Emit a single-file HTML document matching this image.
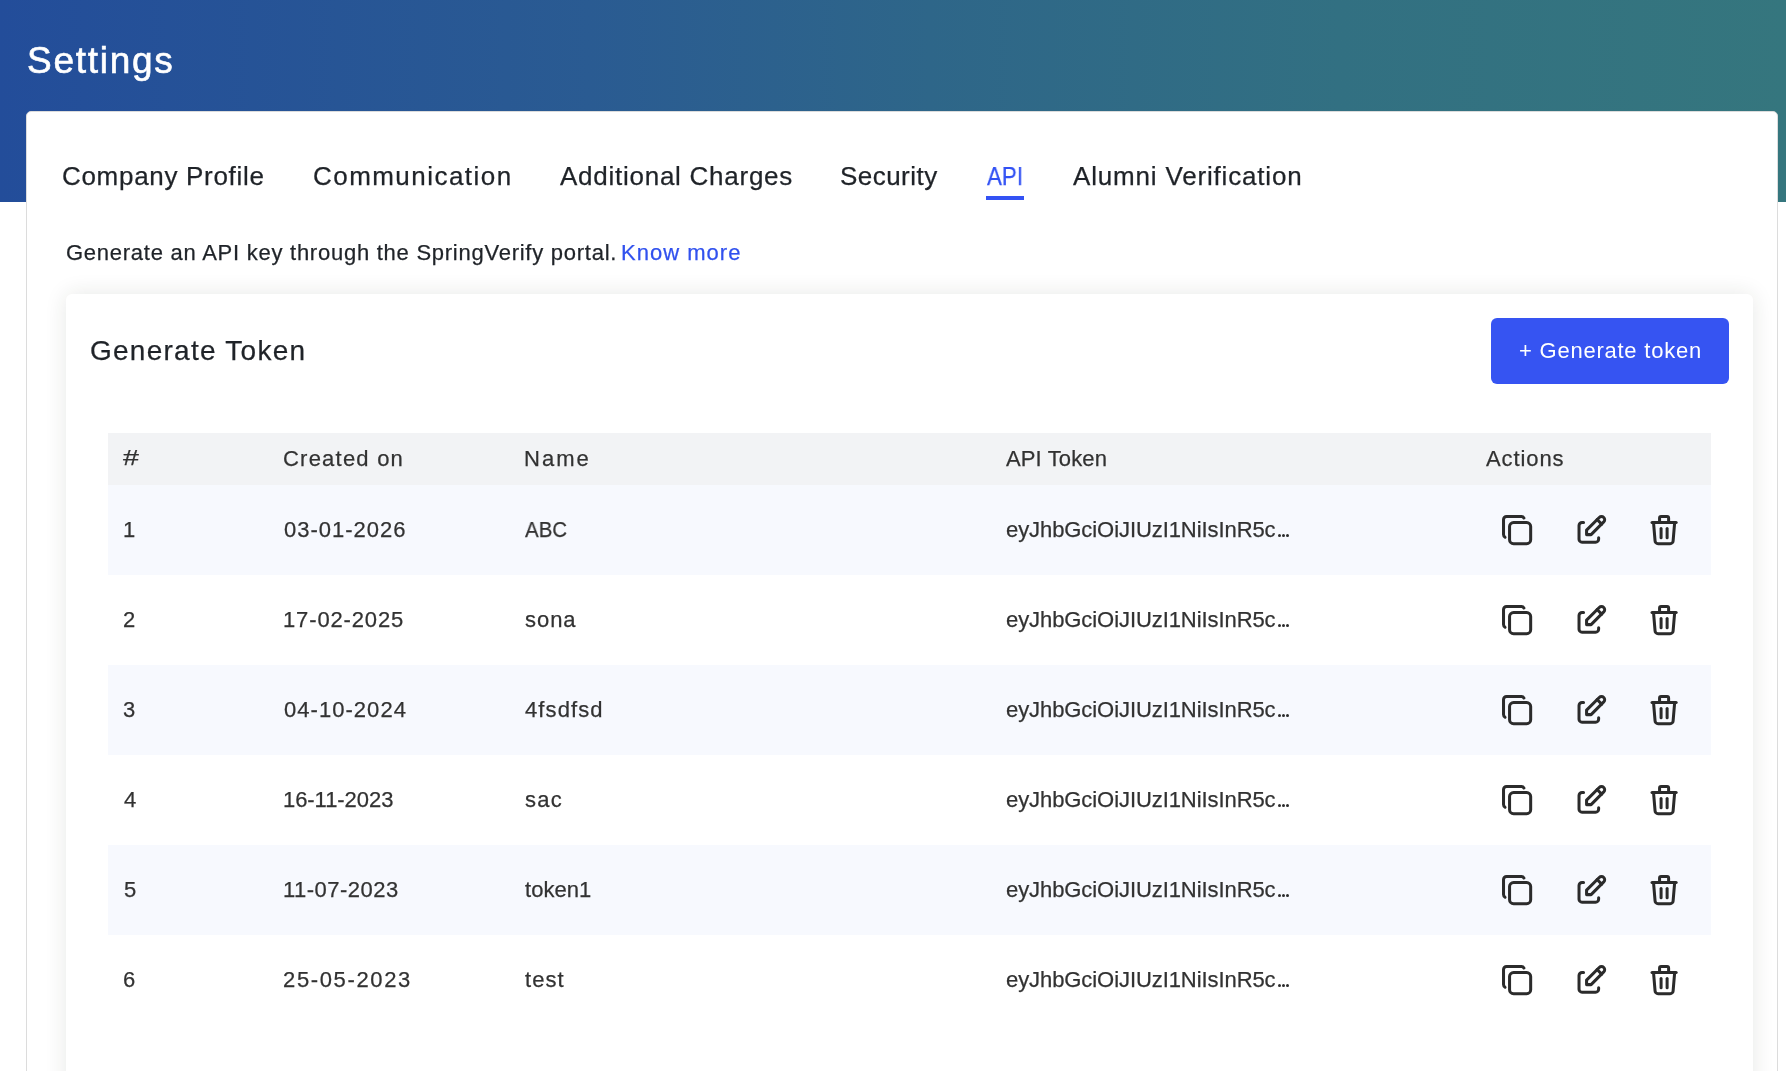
<!DOCTYPE html>
<html>
<head>
<meta charset="utf-8">
<style>
* { box-sizing: border-box; margin: 0; padding: 0; }
html, body { width: 1786px; height: 1071px; overflow: hidden; background: #fff; }
body { font-family: "Liberation Sans", sans-serif; position: relative; }
.hdr { position: absolute; left: 0; top: 0; width: 1786px; height: 202px;
  background: linear-gradient(90deg, #234d9a 0%, #2a5b92 33%, #2e6689 52%, #327082 75%, #35767e 100%); }
.card { position: absolute; left: 26px; top: 111px; width: 1752px; height: 1000px; background: #fff;
  border: 1px solid #dcdcdc; border-radius: 5px; }
.uline { position: absolute; left: 986px; top: 196px; width: 38px; height: 4px; background: #3352f4; }
.inner { position: absolute; left: 66px; top: 294px; width: 1687px; height: 900px; background: #fff;
  border-radius: 6px; box-shadow: 0 0 22px rgba(40,50,30,0.11); }
.btn { position: absolute; left: 1491px; top: 318px; width: 238px; height: 66px; background: #3654f2; border-radius: 6px; }
.thead { position: absolute; left: 108px; top: 433px; width: 1603px; height: 52px; background: #f2f3f5; }
.row { position: absolute; left: 108px; width: 1603px; height: 90px; background: #f7f9fe; }
.t { position: absolute; white-space: nowrap; -webkit-text-stroke: 0.25px currentColor; will-change: transform; }
.ic { position: absolute; }
.dot { position: absolute; width: 3px; height: 3px; border-radius: 50%; background: #2b2b2b; }
</style>
</head>
<body>
<div class="hdr"></div>
<div class="card"></div>
<div class="uline"></div>
<div class="inner"></div>
<div class="btn"></div>
<div class="thead"></div>
<div class="row" style="top:485px"></div>
<div class="row" style="top:665px"></div>
<div class="row" style="top:845px"></div>
<svg class="ic" style="left:1499.4px;top:512.1px" width="36.2" height="36.2" viewBox="0 0 24 24" fill="none" stroke="#2b2b2b" stroke-width="2" stroke-linecap="round" stroke-linejoin="round"><path d="M7 7m0 2.667a2.667 2.667 0 0 1 2.667 -2.667h8.666a2.667 2.667 0 0 1 2.667 2.667v8.666a2.667 2.667 0 0 1 -2.667 2.667h-8.666a2.667 2.667 0 0 1 -2.667 -2.667z"/><path d="M4.012 16.737a2.005 2.005 0 0 1 -1.012 -1.737v-10c0 -1.1 .9 -2 2 -2h10c.75 0 1.158 .385 1.5 1"/></svg>
<svg class="ic" style="left:1572.6px;top:512.1px" width="36.2" height="36.2" viewBox="0 0 24 24" fill="none" stroke="#2b2b2b" stroke-width="2" stroke-linecap="round" stroke-linejoin="round"><path d="M7 7h-1a2 2 0 0 0 -2 2v9a2 2 0 0 0 2 2h9a2 2 0 0 0 2 -2v-1"/><path d="M20.385 6.585a2.1 2.1 0 0 0 -2.97 -2.97l-8.415 8.385v3h3l8.385 -8.415z"/><path d="M16 5l3 3"/></svg>
<svg class="ic" style="left:1646.1px;top:512.1px" width="36.2" height="36.2" viewBox="0 0 24 24" fill="none" stroke="#2b2b2b" stroke-width="2" stroke-linecap="round" stroke-linejoin="round"><path d="M4 7l16 0"/><path d="M10 11l0 6"/><path d="M14 11l0 6"/><path d="M5 7l1 12a2 2 0 0 0 2 2h8a2 2 0 0 0 2 -2l1 -12"/><path d="M9 7v-3a1 1 0 0 1 1 -1h4a1 1 0 0 1 1 1v3"/></svg>
<svg class="ic" style="left:1499.4px;top:602.1px" width="36.2" height="36.2" viewBox="0 0 24 24" fill="none" stroke="#2b2b2b" stroke-width="2" stroke-linecap="round" stroke-linejoin="round"><path d="M7 7m0 2.667a2.667 2.667 0 0 1 2.667 -2.667h8.666a2.667 2.667 0 0 1 2.667 2.667v8.666a2.667 2.667 0 0 1 -2.667 2.667h-8.666a2.667 2.667 0 0 1 -2.667 -2.667z"/><path d="M4.012 16.737a2.005 2.005 0 0 1 -1.012 -1.737v-10c0 -1.1 .9 -2 2 -2h10c.75 0 1.158 .385 1.5 1"/></svg>
<svg class="ic" style="left:1572.6px;top:602.1px" width="36.2" height="36.2" viewBox="0 0 24 24" fill="none" stroke="#2b2b2b" stroke-width="2" stroke-linecap="round" stroke-linejoin="round"><path d="M7 7h-1a2 2 0 0 0 -2 2v9a2 2 0 0 0 2 2h9a2 2 0 0 0 2 -2v-1"/><path d="M20.385 6.585a2.1 2.1 0 0 0 -2.97 -2.97l-8.415 8.385v3h3l8.385 -8.415z"/><path d="M16 5l3 3"/></svg>
<svg class="ic" style="left:1646.1px;top:602.1px" width="36.2" height="36.2" viewBox="0 0 24 24" fill="none" stroke="#2b2b2b" stroke-width="2" stroke-linecap="round" stroke-linejoin="round"><path d="M4 7l16 0"/><path d="M10 11l0 6"/><path d="M14 11l0 6"/><path d="M5 7l1 12a2 2 0 0 0 2 2h8a2 2 0 0 0 2 -2l1 -12"/><path d="M9 7v-3a1 1 0 0 1 1 -1h4a1 1 0 0 1 1 1v3"/></svg>
<svg class="ic" style="left:1499.4px;top:692.1px" width="36.2" height="36.2" viewBox="0 0 24 24" fill="none" stroke="#2b2b2b" stroke-width="2" stroke-linecap="round" stroke-linejoin="round"><path d="M7 7m0 2.667a2.667 2.667 0 0 1 2.667 -2.667h8.666a2.667 2.667 0 0 1 2.667 2.667v8.666a2.667 2.667 0 0 1 -2.667 2.667h-8.666a2.667 2.667 0 0 1 -2.667 -2.667z"/><path d="M4.012 16.737a2.005 2.005 0 0 1 -1.012 -1.737v-10c0 -1.1 .9 -2 2 -2h10c.75 0 1.158 .385 1.5 1"/></svg>
<svg class="ic" style="left:1572.6px;top:692.1px" width="36.2" height="36.2" viewBox="0 0 24 24" fill="none" stroke="#2b2b2b" stroke-width="2" stroke-linecap="round" stroke-linejoin="round"><path d="M7 7h-1a2 2 0 0 0 -2 2v9a2 2 0 0 0 2 2h9a2 2 0 0 0 2 -2v-1"/><path d="M20.385 6.585a2.1 2.1 0 0 0 -2.97 -2.97l-8.415 8.385v3h3l8.385 -8.415z"/><path d="M16 5l3 3"/></svg>
<svg class="ic" style="left:1646.1px;top:692.1px" width="36.2" height="36.2" viewBox="0 0 24 24" fill="none" stroke="#2b2b2b" stroke-width="2" stroke-linecap="round" stroke-linejoin="round"><path d="M4 7l16 0"/><path d="M10 11l0 6"/><path d="M14 11l0 6"/><path d="M5 7l1 12a2 2 0 0 0 2 2h8a2 2 0 0 0 2 -2l1 -12"/><path d="M9 7v-3a1 1 0 0 1 1 -1h4a1 1 0 0 1 1 1v3"/></svg>
<svg class="ic" style="left:1499.4px;top:782.1px" width="36.2" height="36.2" viewBox="0 0 24 24" fill="none" stroke="#2b2b2b" stroke-width="2" stroke-linecap="round" stroke-linejoin="round"><path d="M7 7m0 2.667a2.667 2.667 0 0 1 2.667 -2.667h8.666a2.667 2.667 0 0 1 2.667 2.667v8.666a2.667 2.667 0 0 1 -2.667 2.667h-8.666a2.667 2.667 0 0 1 -2.667 -2.667z"/><path d="M4.012 16.737a2.005 2.005 0 0 1 -1.012 -1.737v-10c0 -1.1 .9 -2 2 -2h10c.75 0 1.158 .385 1.5 1"/></svg>
<svg class="ic" style="left:1572.6px;top:782.1px" width="36.2" height="36.2" viewBox="0 0 24 24" fill="none" stroke="#2b2b2b" stroke-width="2" stroke-linecap="round" stroke-linejoin="round"><path d="M7 7h-1a2 2 0 0 0 -2 2v9a2 2 0 0 0 2 2h9a2 2 0 0 0 2 -2v-1"/><path d="M20.385 6.585a2.1 2.1 0 0 0 -2.97 -2.97l-8.415 8.385v3h3l8.385 -8.415z"/><path d="M16 5l3 3"/></svg>
<svg class="ic" style="left:1646.1px;top:782.1px" width="36.2" height="36.2" viewBox="0 0 24 24" fill="none" stroke="#2b2b2b" stroke-width="2" stroke-linecap="round" stroke-linejoin="round"><path d="M4 7l16 0"/><path d="M10 11l0 6"/><path d="M14 11l0 6"/><path d="M5 7l1 12a2 2 0 0 0 2 2h8a2 2 0 0 0 2 -2l1 -12"/><path d="M9 7v-3a1 1 0 0 1 1 -1h4a1 1 0 0 1 1 1v3"/></svg>
<svg class="ic" style="left:1499.4px;top:872.1px" width="36.2" height="36.2" viewBox="0 0 24 24" fill="none" stroke="#2b2b2b" stroke-width="2" stroke-linecap="round" stroke-linejoin="round"><path d="M7 7m0 2.667a2.667 2.667 0 0 1 2.667 -2.667h8.666a2.667 2.667 0 0 1 2.667 2.667v8.666a2.667 2.667 0 0 1 -2.667 2.667h-8.666a2.667 2.667 0 0 1 -2.667 -2.667z"/><path d="M4.012 16.737a2.005 2.005 0 0 1 -1.012 -1.737v-10c0 -1.1 .9 -2 2 -2h10c.75 0 1.158 .385 1.5 1"/></svg>
<svg class="ic" style="left:1572.6px;top:872.1px" width="36.2" height="36.2" viewBox="0 0 24 24" fill="none" stroke="#2b2b2b" stroke-width="2" stroke-linecap="round" stroke-linejoin="round"><path d="M7 7h-1a2 2 0 0 0 -2 2v9a2 2 0 0 0 2 2h9a2 2 0 0 0 2 -2v-1"/><path d="M20.385 6.585a2.1 2.1 0 0 0 -2.97 -2.97l-8.415 8.385v3h3l8.385 -8.415z"/><path d="M16 5l3 3"/></svg>
<svg class="ic" style="left:1646.1px;top:872.1px" width="36.2" height="36.2" viewBox="0 0 24 24" fill="none" stroke="#2b2b2b" stroke-width="2" stroke-linecap="round" stroke-linejoin="round"><path d="M4 7l16 0"/><path d="M10 11l0 6"/><path d="M14 11l0 6"/><path d="M5 7l1 12a2 2 0 0 0 2 2h8a2 2 0 0 0 2 -2l1 -12"/><path d="M9 7v-3a1 1 0 0 1 1 -1h4a1 1 0 0 1 1 1v3"/></svg>
<svg class="ic" style="left:1499.4px;top:962.1px" width="36.2" height="36.2" viewBox="0 0 24 24" fill="none" stroke="#2b2b2b" stroke-width="2" stroke-linecap="round" stroke-linejoin="round"><path d="M7 7m0 2.667a2.667 2.667 0 0 1 2.667 -2.667h8.666a2.667 2.667 0 0 1 2.667 2.667v8.666a2.667 2.667 0 0 1 -2.667 2.667h-8.666a2.667 2.667 0 0 1 -2.667 -2.667z"/><path d="M4.012 16.737a2.005 2.005 0 0 1 -1.012 -1.737v-10c0 -1.1 .9 -2 2 -2h10c.75 0 1.158 .385 1.5 1"/></svg>
<svg class="ic" style="left:1572.6px;top:962.1px" width="36.2" height="36.2" viewBox="0 0 24 24" fill="none" stroke="#2b2b2b" stroke-width="2" stroke-linecap="round" stroke-linejoin="round"><path d="M7 7h-1a2 2 0 0 0 -2 2v9a2 2 0 0 0 2 2h9a2 2 0 0 0 2 -2v-1"/><path d="M20.385 6.585a2.1 2.1 0 0 0 -2.97 -2.97l-8.415 8.385v3h3l8.385 -8.415z"/><path d="M16 5l3 3"/></svg>
<svg class="ic" style="left:1646.1px;top:962.1px" width="36.2" height="36.2" viewBox="0 0 24 24" fill="none" stroke="#2b2b2b" stroke-width="2" stroke-linecap="round" stroke-linejoin="round"><path d="M4 7l16 0"/><path d="M10 11l0 6"/><path d="M14 11l0 6"/><path d="M5 7l1 12a2 2 0 0 0 2 2h8a2 2 0 0 0 2 -2l1 -12"/><path d="M9 7v-3a1 1 0 0 1 1 -1h4a1 1 0 0 1 1 1v3"/></svg>
<div class="dot" style="left:1277.5px;top:534.1px"></div>
<div class="dot" style="left:1281.7px;top:534.1px"></div>
<div class="dot" style="left:1286.1px;top:534.1px"></div>
<div class="dot" style="left:1277.5px;top:624.1px"></div>
<div class="dot" style="left:1281.7px;top:624.1px"></div>
<div class="dot" style="left:1286.1px;top:624.1px"></div>
<div class="dot" style="left:1277.5px;top:714.1px"></div>
<div class="dot" style="left:1281.7px;top:714.1px"></div>
<div class="dot" style="left:1286.1px;top:714.1px"></div>
<div class="dot" style="left:1277.5px;top:804.1px"></div>
<div class="dot" style="left:1281.7px;top:804.1px"></div>
<div class="dot" style="left:1286.1px;top:804.1px"></div>
<div class="dot" style="left:1277.5px;top:894.1px"></div>
<div class="dot" style="left:1281.7px;top:894.1px"></div>
<div class="dot" style="left:1286.1px;top:894.1px"></div>
<div class="dot" style="left:1277.5px;top:984.1px"></div>
<div class="dot" style="left:1281.7px;top:984.1px"></div>
<div class="dot" style="left:1286.1px;top:984.1px"></div>
<div class="t" style="left:26.64px;top:41.88px;font-size:37px;line-height:37px;color:#ffffff;letter-spacing:1.723px;-webkit-text-stroke:0.6px #fff">Settings</div>
<div class="t" style="left:62.26px;top:163.29px;font-size:26px;line-height:26px;color:#1f2328;letter-spacing:0.694px">Company Profile</div>
<div class="t" style="left:312.52px;top:163.29px;font-size:26px;line-height:26px;color:#1f2328;letter-spacing:1.455px">Communication</div>
<div class="t" style="left:559.80px;top:163.29px;font-size:26px;line-height:26px;color:#1f2328;letter-spacing:0.741px">Additional Charges</div>
<div class="t" style="left:840.38px;top:163.29px;font-size:26px;line-height:26px;color:#1f2328;letter-spacing:0.463px">Security</div>
<div class="t" style="left:987.30px;top:163.29px;font-size:26px;line-height:26px;color:#3151f4;letter-spacing:0.000px;transform:scaleX(0.8585);transform-origin:0 0">API</div>
<div class="t" style="left:1072.92px;top:163.29px;font-size:26px;line-height:26px;color:#1f2328;letter-spacing:0.820px">Alumni Verification</div>
<div class="t" style="left:65.90px;top:242.38px;font-size:22px;line-height:22px;color:#1f2328;letter-spacing:0.745px">Generate an API key through the SpringVerify portal.</div>
<div class="t" style="left:621.38px;top:242.38px;font-size:22px;line-height:22px;color:#3151ee;letter-spacing:1.012px">Know more</div>
<div class="t" style="left:90.40px;top:336.60px;font-size:28px;line-height:28px;color:#1f2328;letter-spacing:1.260px">Generate Token</div>
<div class="t" style="left:1519.40px;top:340.38px;font-size:22px;line-height:22px;color:#ffffff;letter-spacing:0.768px;-webkit-text-stroke:0">+ Generate token</div>
<div class="t" style="left:123.48px;top:447.18px;font-size:22px;line-height:22px;color:#323232;letter-spacing:0.000px;transform:scaleX(1.3);transform-origin:0 0">#</div>
<div class="t" style="left:282.76px;top:448.18px;font-size:22px;line-height:22px;color:#323232;letter-spacing:1.220px">Created on</div>
<div class="t" style="left:523.64px;top:448.18px;font-size:22px;line-height:22px;color:#323232;letter-spacing:2.040px">Name</div>
<div class="t" style="left:1005.80px;top:448.18px;font-size:22px;line-height:22px;color:#323232;letter-spacing:0.135px">API Token</div>
<div class="t" style="left:1486.04px;top:448.18px;font-size:22px;line-height:22px;color:#323232;letter-spacing:0.900px">Actions</div>
<div class="t" style="left:122.76px;top:519.48px;font-size:22px;line-height:22px;color:#323232;letter-spacing:0.000px">1</div>
<div class="t" style="left:284.04px;top:519.48px;font-size:22px;line-height:22px;color:#323232;letter-spacing:1.000px">03-01-2026</div>
<div class="t" style="left:524.54px;top:519.48px;font-size:22px;line-height:22px;color:#323232;letter-spacing:0.000px;transform:scaleX(0.9311);transform-origin:0 0">ABC</div>
<div class="t" style="left:1005.54px;top:519.48px;font-size:22px;line-height:22px;color:#323232;letter-spacing:-0.075px">eyJhbGciOiJIUzI1NiIsInR5c</div>
<div class="t" style="left:122.76px;top:609.48px;font-size:22px;line-height:22px;color:#323232;letter-spacing:0.000px">2</div>
<div class="t" style="left:283.14px;top:609.48px;font-size:22px;line-height:22px;color:#323232;letter-spacing:0.860px">17-02-2025</div>
<div class="t" style="left:524.54px;top:609.48px;font-size:22px;line-height:22px;color:#323232;letter-spacing:0.960px">sona</div>
<div class="t" style="left:1005.54px;top:609.48px;font-size:22px;line-height:22px;color:#323232;letter-spacing:-0.075px">eyJhbGciOiJIUzI1NiIsInR5c</div>
<div class="t" style="left:122.76px;top:699.48px;font-size:22px;line-height:22px;color:#323232;letter-spacing:0.000px">3</div>
<div class="t" style="left:284.04px;top:699.48px;font-size:22px;line-height:22px;color:#323232;letter-spacing:1.040px">04-10-2024</div>
<div class="t" style="left:524.54px;top:699.48px;font-size:22px;line-height:22px;color:#323232;letter-spacing:1.110px">4fsdfsd</div>
<div class="t" style="left:1005.54px;top:699.48px;font-size:22px;line-height:22px;color:#323232;letter-spacing:-0.075px">eyJhbGciOiJIUzI1NiIsInR5c</div>
<div class="t" style="left:123.66px;top:789.48px;font-size:22px;line-height:22px;color:#323232;letter-spacing:0.000px">4</div>
<div class="t" style="left:283.14px;top:789.48px;font-size:22px;line-height:22px;color:#323232;letter-spacing:-0.060px">16-11-2023</div>
<div class="t" style="left:524.54px;top:789.48px;font-size:22px;line-height:22px;color:#323232;letter-spacing:1.260px">sac</div>
<div class="t" style="left:1005.54px;top:789.48px;font-size:22px;line-height:22px;color:#323232;letter-spacing:-0.075px">eyJhbGciOiJIUzI1NiIsInR5c</div>
<div class="t" style="left:123.66px;top:879.48px;font-size:22px;line-height:22px;color:#323232;letter-spacing:0.000px">5</div>
<div class="t" style="left:283.14px;top:879.48px;font-size:22px;line-height:22px;color:#323232;letter-spacing:0.480px">11-07-2023</div>
<div class="t" style="left:524.54px;top:879.48px;font-size:22px;line-height:22px;color:#323232;letter-spacing:0.036px">token1</div>
<div class="t" style="left:1005.54px;top:879.48px;font-size:22px;line-height:22px;color:#323232;letter-spacing:-0.075px">eyJhbGciOiJIUzI1NiIsInR5c</div>
<div class="t" style="left:122.76px;top:969.48px;font-size:22px;line-height:22px;color:#323232;letter-spacing:0.000px">6</div>
<div class="t" style="left:283.14px;top:969.48px;font-size:22px;line-height:22px;color:#323232;letter-spacing:1.640px">25-05-2023</div>
<div class="t" style="left:524.54px;top:969.48px;font-size:22px;line-height:22px;color:#323232;letter-spacing:1.020px">test</div>
<div class="t" style="left:1005.54px;top:969.48px;font-size:22px;line-height:22px;color:#323232;letter-spacing:-0.075px">eyJhbGciOiJIUzI1NiIsInR5c</div>
</body>
</html>
